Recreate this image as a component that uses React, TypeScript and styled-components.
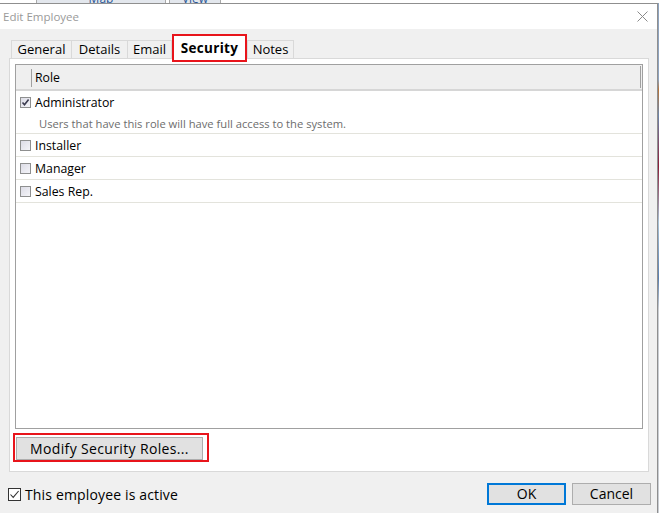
import React from "react";
import styled, { createGlobalStyle } from "styled-components";

const GlobalStyle = createGlobalStyle`
  html, body { margin: 0; padding: 0; }
  body {
    width: 659px;
    height: 513px;
    overflow: hidden;
    background: #f0f0f0;
    font-family: "Open Sans", "Noto Sans", "DejaVu Sans", sans-serif;
    font-size: 12px;
    color: #000;
  }
  * { box-sizing: border-box; }
`;

const Page = styled.div`
  width: 659px;
  height: 513px;
  display: flex;
  flex-direction: column;
  overflow: hidden;
`;

const Backdrop = styled.div`
  height: 3px;
  flex: none;
  display: flex;
  background: #ffffff;
  padding-left: 36px;
  overflow: hidden;
`;

const BackTab = styled.div<{ $w: number }>`
  width: ${(p) => p.$w}px;
  height: 3px;
  border-left: 1px solid #a9a9a9;
  border-right: 1px solid #a9a9a9;
  background: #e3e7ed;
  color: #2b5797;
  display: flex;
  justify-content: center;
  align-items: flex-end;
  overflow: hidden;
  & + & { margin-left: 3px; }
`;

const BackLabel = styled.span`
  line-height: 14px;
  margin-bottom: -3px;
  font-size: 12px;
`;

const MainRow = styled.div`
  flex: 1;
  display: flex;
  min-height: 0;
`;

const SideStrip = styled.div`
  flex: 1;
  background: linear-gradient(#8ea3bf 0%, #8ea3bf 15%, #b7743a 17%, #6d86aa 22%, #8c1d3a 32%, #a9c3d8 43%, #5a7fb0 54%, #c9cdd3 60%, #c9cdd3 100%);
`;

const Dialog = styled.div`
  width: 658px;
  flex: none;
  display: flex;
  flex-direction: column;
  border-top: 1px solid #8f8f8f;
  border-right: 1px solid #8f8f8f;
  background: #f0f0f0;
`;

const TitleBar = styled.div`
  height: 25px;
  flex: none;
  background: #ffffff;
  display: flex;
  align-items: center;
  justify-content: space-between;
  padding: 0 9px 0 3px;
  color: #9a9a9a;
  font-size: 11.5px;
`;

const Body = styled.div`
  padding: 11px 0 0 9px;
  display: flex;
  flex-direction: column;
`;

const TabRow = styled.div`
  display: flex;
  align-items: flex-start;
  height: 18px;
  margin-left: 2px;
  position: relative;
  z-index: 1;
`;

const Tab = styled.div<{ $w: number; $overlap?: boolean }>`
  width: ${(p) => p.$w}px;
  height: 18px;
  margin-left: ${(p) => (p.$overlap ? -1 : 0)}px;
  border: 1px solid #d9d9d9;
  border-bottom: none;
  background: #f0f0f0;
  display: flex;
  align-items: center;
  justify-content: center;
  font-size: 13px;
  line-height: 16px;
  padding-bottom: 2px;
`;

const SelectedTab = styled.div<{ $w: number }>`
  width: ${(p) => p.$w}px;
  height: 28px;
  margin-top: -6px;
  border: 2px solid #e8141b;
  background: #ffffff;
  display: flex;
  align-items: center;
  justify-content: center;
  font-weight: bold;
  font-size: 13.5px;
  letter-spacing: 0.3px;
  padding-bottom: 1px;
`;

const Panel = styled.div`
  width: 640px;
  height: 414px;
  border: 1px solid #d9d9d9;
  background: #ffffff;
  padding: 5px 0 0 5px;
  display: flex;
  flex-direction: column;
`;

const List = styled.div`
  width: 628px;
  height: 365px;
  flex: none;
  border: 1px solid #a0a0a0;
  background: #ffffff;
  display: flex;
  flex-direction: column;
  font-size: 12.3px;
`;

const Header = styled.div`
  height: 26px;
  flex: none;
  display: flex;
  align-items: center;
  background: #efefef;
  border-bottom: 2px solid #d6d6d6;
`;

const HeaderGrip = styled.div`
  width: 16px;
  height: 18px;
  border-right: 1px solid #a0a0a0;
  margin-top: 2px;
`;

const HeaderCell = styled.div`
  flex: 1;
  padding-left: 3px;
`;

const HeaderEnd = styled.div`
  width: 1px;
  height: 22px;
  background: #a0a0a0;
  margin-right: 1px;
`;

const Row = styled.div`
  border-bottom: 1px solid #e3e3dc;
  padding-left: 4px;
  display: flex;
  flex-direction: column;
`;

const RoleLine = styled.div`
  height: 22px;
  display: flex;
  align-items: center;
  gap: 4px;
`;

const Description = styled.div`
  height: 20px;
  padding-left: 19px;
  color: #6d6d6d;
  font-size: 11.2px;
  display: flex;
  align-items: center;
`;

const SmallBox = styled.span`
  width: 11px;
  height: 11px;
  flex: none;
  border: 1px solid #8e8f8f;
  background: linear-gradient(135deg, #dcdce6 0%, #f4f4f8 100%);
  display: flex;
  align-items: center;
  justify-content: center;
`;

const Annotation = styled.div`
  align-self: flex-start;
  margin: 4px 0 0 -2px;
  border: 2px solid #e8141b;
  padding: 2px 4px 0 1px;
`;

const Button = styled.button<{ $w: number; $h: number; $default?: boolean }>`
  width: ${(p) => p.$w}px;
  height: ${(p) => p.$h}px;
  border: ${(p) => (p.$default ? "2px solid #0078d7" : "1px solid #adadad")};
  background: #e1e1e1;
  font-family: inherit;
  font-size: 14px;
  color: #000;
  padding: 0;
  display: flex;
  align-items: center;
  justify-content: center;
`;

const WideLabel = styled.span`
  letter-spacing: 0.35px;
`;

const Footer = styled.div`
  height: 41px;
  flex: none;
  display: flex;
  align-items: center;
  padding: 2px 6px 0 8px;
  gap: 6px;
`;

const ActiveLabel = styled.label`
  flex: 1;
  display: flex;
  align-items: center;
  gap: 4px;
  padding-top: 1px;
  font-size: 14px;
  letter-spacing: 0.15px;
`;

const BigBox = styled.span`
  width: 13px;
  height: 13px;
  flex: none;
  border: 1px solid #333333;
  background: #ffffff;
  display: flex;
  align-items: center;
  justify-content: center;
`;

const CloseIcon = () => (
  <svg width="11" height="11" viewBox="0 0 11 11">
    <path d="M0.5 0.5 L10.5 10.5 M10.5 0.5 L0.5 10.5" stroke="#8a8a8a" strokeWidth="1" fill="none" />
  </svg>
);

const SmallCheck = () => (
  <svg width="9" height="9" viewBox="0 0 9 9">
    <path d="M1.5 4.5 L3.5 6.8 L7.6 1.6" stroke="#3c3c50" strokeWidth="1.6" fill="none" />
  </svg>
);

const BigCheck = () => (
  <svg width="11" height="11" viewBox="0 0 11 11">
    <path d="M1.5 5.5 L4.2 8.4 L9.6 2" stroke="#333" strokeWidth="1.1" fill="none" />
  </svg>
);

const roles = [
  { name: "Administrator", checked: true, desc: "Users that have this role will have full access to the system." },
  { name: "Installer", checked: false },
  { name: "Manager", checked: false },
  { name: "Sales Rep.", checked: false },
];

export default function App() {
  return (
    <>
      <GlobalStyle />
      <Page>
        <Backdrop>
          <BackTab $w={130}>
            <BackLabel>Map</BackLabel>
          </BackTab>
          <BackTab $w={52}>
            <BackLabel>View</BackLabel>
          </BackTab>
        </Backdrop>
        <MainRow>
          <Dialog>
            <TitleBar>
              <span>Edit Employee</span>
              <CloseIcon />
            </TitleBar>
            <Body>
              <TabRow>
                <Tab $w={61}>General</Tab>
                <Tab $w={57} $overlap>Details</Tab>
                <Tab $w={45} $overlap>Email</Tab>
                <SelectedTab $w={75}>Security</SelectedTab>
                <Tab $w={47}>Notes</Tab>
              </TabRow>
              <Panel>
                <List>
                  <Header>
                    <HeaderGrip />
                    <HeaderCell>Role</HeaderCell>
                    <HeaderEnd />
                  </Header>
                  {roles.map((r) => (
                    <Row key={r.name}>
                      <RoleLine>
                        <SmallBox>{r.checked && <SmallCheck />}</SmallBox>
                        <span>{r.name}</span>
                      </RoleLine>
                      {r.desc && <Description>{r.desc}</Description>}
                    </Row>
                  ))}
                </List>
                <Annotation>
                  <Button $w={187} $h={23}>
                    <WideLabel>Modify Security Roles...</WideLabel>
                  </Button>
                </Annotation>
              </Panel>
            </Body>
            <Footer>
              <ActiveLabel>
                <BigBox>
                  <BigCheck />
                </BigBox>
                <span>This employee is active</span>
              </ActiveLabel>
              <Button $w={79} $h={22} $default>OK</Button>
              <Button $w={79} $h={22}>Cancel</Button>
            </Footer>
          </Dialog>
          <SideStrip />
        </MainRow>
      </Page>
    </>
  );
}
